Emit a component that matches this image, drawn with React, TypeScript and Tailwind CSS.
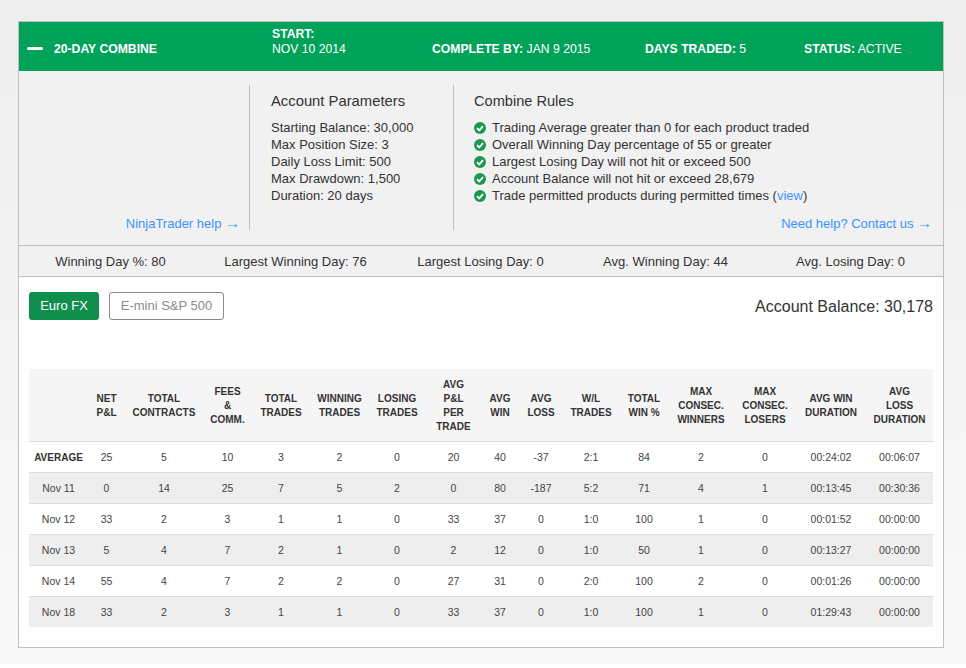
const headers: string[][] = [
  [""],
  ["NET", "P&L"],
  ["TOTAL", "CONTRACTS"],
  ["FEES", "&", "COMM."],
  ["TOTAL", "TRADES"],
  ["WINNING", "TRADES"],
  ["LOSING", "TRADES"],
  ["AVG", "P&L", "PER", "TRADE"],
  ["AVG", "WIN"],
  ["AVG", "LOSS"],
  ["W/L", "TRADES"],
  ["TOTAL", "WIN %"],
  ["MAX", "CONSEC.", "WINNERS"],
  ["MAX", "CONSEC.", "LOSERS"],
  ["AVG WIN", "DURATION"],
  ["AVG", "LOSS", "DURATION"],
];

const colWidths = [61, 33, 82, 45, 62, 55, 60, 53, 40, 42, 58, 48, 66, 62, 70, 67];

const rows: string[][] = [
  ["AVERAGE", "25", "5", "10", "3", "2", "0", "20", "40", "-37", "2:1", "84", "2", "0", "00:24:02", "00:06:07"],
  ["Nov 11", "0", "14", "25", "7", "5", "2", "0", "80", "-187", "5:2", "71", "4", "1", "00:13:45", "00:30:36"],
  ["Nov 12", "33", "2", "3", "1", "1", "0", "33", "37", "0", "1:0", "100", "1", "0", "00:01:52", "00:00:00"],
  ["Nov 13", "5", "4", "7", "2", "1", "0", "2", "12", "0", "1:0", "50", "1", "0", "00:13:27", "00:00:00"],
  ["Nov 14", "55", "4", "7", "2", "2", "0", "27", "31", "0", "2:0", "100", "2", "0", "00:01:26", "00:00:00"],
  ["Nov 18", "33", "2", "3", "1", "1", "0", "33", "37", "0", "1:0", "100", "1", "0", "01:29:43", "00:00:00"],
];

const params = [
  "Starting Balance: 30,000",
  "Max Position Size: 3",
  "Daily Loss Limit: 500",
  "Max Drawdown: 1,500",
  "Duration: 20 days",
];

const stats = [
  "Winning Day %: 80",
  "Largest Winning Day: 76",
  "Largest Losing Day: 0",
  "Avg. Winning Day: 44",
  "Avg. Losing Day: 0",
];

const CheckIcon = () => (
  <svg width="12" height="12" viewBox="0 0 12 12" className="shrink-0">
    <circle cx="6" cy="6" r="6" fill="#1a9850" />
    <path d="M3 6.2 L5.2 8.4 L9 4.2" fill="none" stroke="#fff" strokeWidth="1.8" />
  </svg>
);

const Arrow = () => <span className="text-[15px] leading-none">→</span>;

export default function App() {
  return (
    <div className="h-[664px] bg-gradient-to-b from-[#eeeeee] to-[#f9f9f9] pt-[21px] pl-[18px] font-['Liberation_Sans',Arial,sans-serif] text-[#333333]">
      <div className="h-[627px] w-[926px] border border-[#bfbfbf] bg-white">
        <div className="flex h-[49px] items-end bg-[#00a25a] pb-[14px] text-[12.2px] leading-[15px] text-white">
          <div className="mb-[7px] ml-[8px] h-[3px] w-[16px] rounded-[2px] bg-white" />
          <div className="ml-[11px] w-[218px] font-bold">20-DAY COMBINE</div>
          <div className="w-[160px]">
            <div className="font-bold">START:</div>
            <div>NOV 10 2014</div>
          </div>
          <div className="w-[213px]">
            <span className="font-bold">COMPLETE BY:</span> JAN 9 2015
          </div>
          <div className="w-[159px]">
            <span className="font-bold">DAYS TRADED:</span> 5
          </div>
          <div>
            <span className="font-bold">STATUS:</span> ACTIVE
          </div>
        </div>

        <div className="flex h-[174px] bg-[#f1f1f1] pt-[14px] text-[13px] leading-[17px]">
          <div className="flex h-[145px] w-[231px] items-end justify-end border-r border-[#bfbfbf] pr-[9px]">
            <a className="leading-[12px] text-[#3c93ff]">NinjaTrader help <Arrow /></a>
          </div>
          <div className="h-[145px] w-[204px] border-r border-[#bfbfbf] pl-[21px]">
            <h3 className="mt-[7px] mb-[9px] text-[14.8px] leading-[18px]">Account Parameters</h3>
            {params.map((p) => (
              <div key={p}>{p}</div>
            ))}
          </div>
          <div className="flex h-[145px] flex-1 flex-col pr-[11px] pl-[20px]">
            <h3 className="mt-[7px] mb-[9px] text-[14.6px] leading-[18px]">Combine Rules</h3>
            <div className="flex items-center gap-[6px]"><CheckIcon />Trading Average greater than 0 for each product traded</div>
            <div className="flex items-center gap-[6px]"><CheckIcon />Overall Winning Day percentage of 55 or greater</div>
            <div className="flex items-center gap-[6px]"><CheckIcon />Largest Losing Day will not hit or exceed 500</div>
            <div className="flex items-center gap-[6px]"><CheckIcon />Account Balance will not hit or exceed 28,679</div>
            <div className="flex items-center gap-[6px]">
              <CheckIcon />
              <span>Trade permitted products during permitted times (<a className="text-[#3c93ff]">view</a>)</span>
            </div>
            <a className="mt-auto self-end leading-[12px] text-[#3c93ff]">Need help? Contact us <Arrow /></a>
          </div>
        </div>

        <div className="h-[32px] border-y border-[#bfbfbf] bg-[#f1f1f1] pt-[1px] text-[13px]">
          <div className="-ml-px grid h-full w-[925px] grid-cols-5 items-center text-center">
            {stats.map((s) => (
              <div key={s}>{s}</div>
            ))}
          </div>
        </div>

        <div className="flex items-start justify-between px-[10px] pt-[15px]">
          <div className="flex gap-[10px] text-[13px]">
            <div className="flex h-[28px] w-[70px] items-center justify-center rounded-[3px] bg-[#0f8e4e] text-white">Euro FX</div>
            <div className="flex h-[28px] w-[115px] items-center justify-center rounded-[3px] border border-[#8a8a8a] text-[#8a8a8a]">E-mini S&amp;P 500</div>
          </div>
          <div className="mt-[5px] text-[16px] leading-[20px]">Account Balance: 30,178</div>
        </div>

        <div className="px-[10px] pt-[49px]">
          <table className="w-[904px] table-fixed border-collapse text-[10.5px] text-[#444444]">
            <colgroup>
              {colWidths.map((w, i) => (
                <col key={i} style={{ width: w }} />
              ))}
            </colgroup>
            <thead>
              <tr className="h-[72px] border-b border-[#dddddd] bg-[#f5f5f5]">
                {headers.map((h, i) => (
                  <th key={i} className="p-0 pt-[2px] text-center text-[10px] leading-[14px] font-bold text-[#333333]">
                    {h.map((line) => (
                      <div key={line}>{line}</div>
                    ))}
                  </th>
                ))}
              </tr>
            </thead>
            <tbody>
              {rows.map((row, r) => (
                <tr key={r} className={`h-[31px] border-b border-[#dddddd] last:border-b-0 ${r % 2 === 1 ? "bg-[#eeeeee]" : "bg-white"}`}>
                  {row.map((cell, c) => (
                    <td key={c} className={`p-0 pt-[2px] text-center ${c === 0 ? "pr-[2px]" : ""} ${r === 0 && c === 0 ? "text-[10px] font-bold text-[#333333]" : ""}`}>
                      {cell}
                    </td>
                  ))}
                </tr>
              ))}
            </tbody>
          </table>
        </div>
      </div>
    </div>
  );
}
